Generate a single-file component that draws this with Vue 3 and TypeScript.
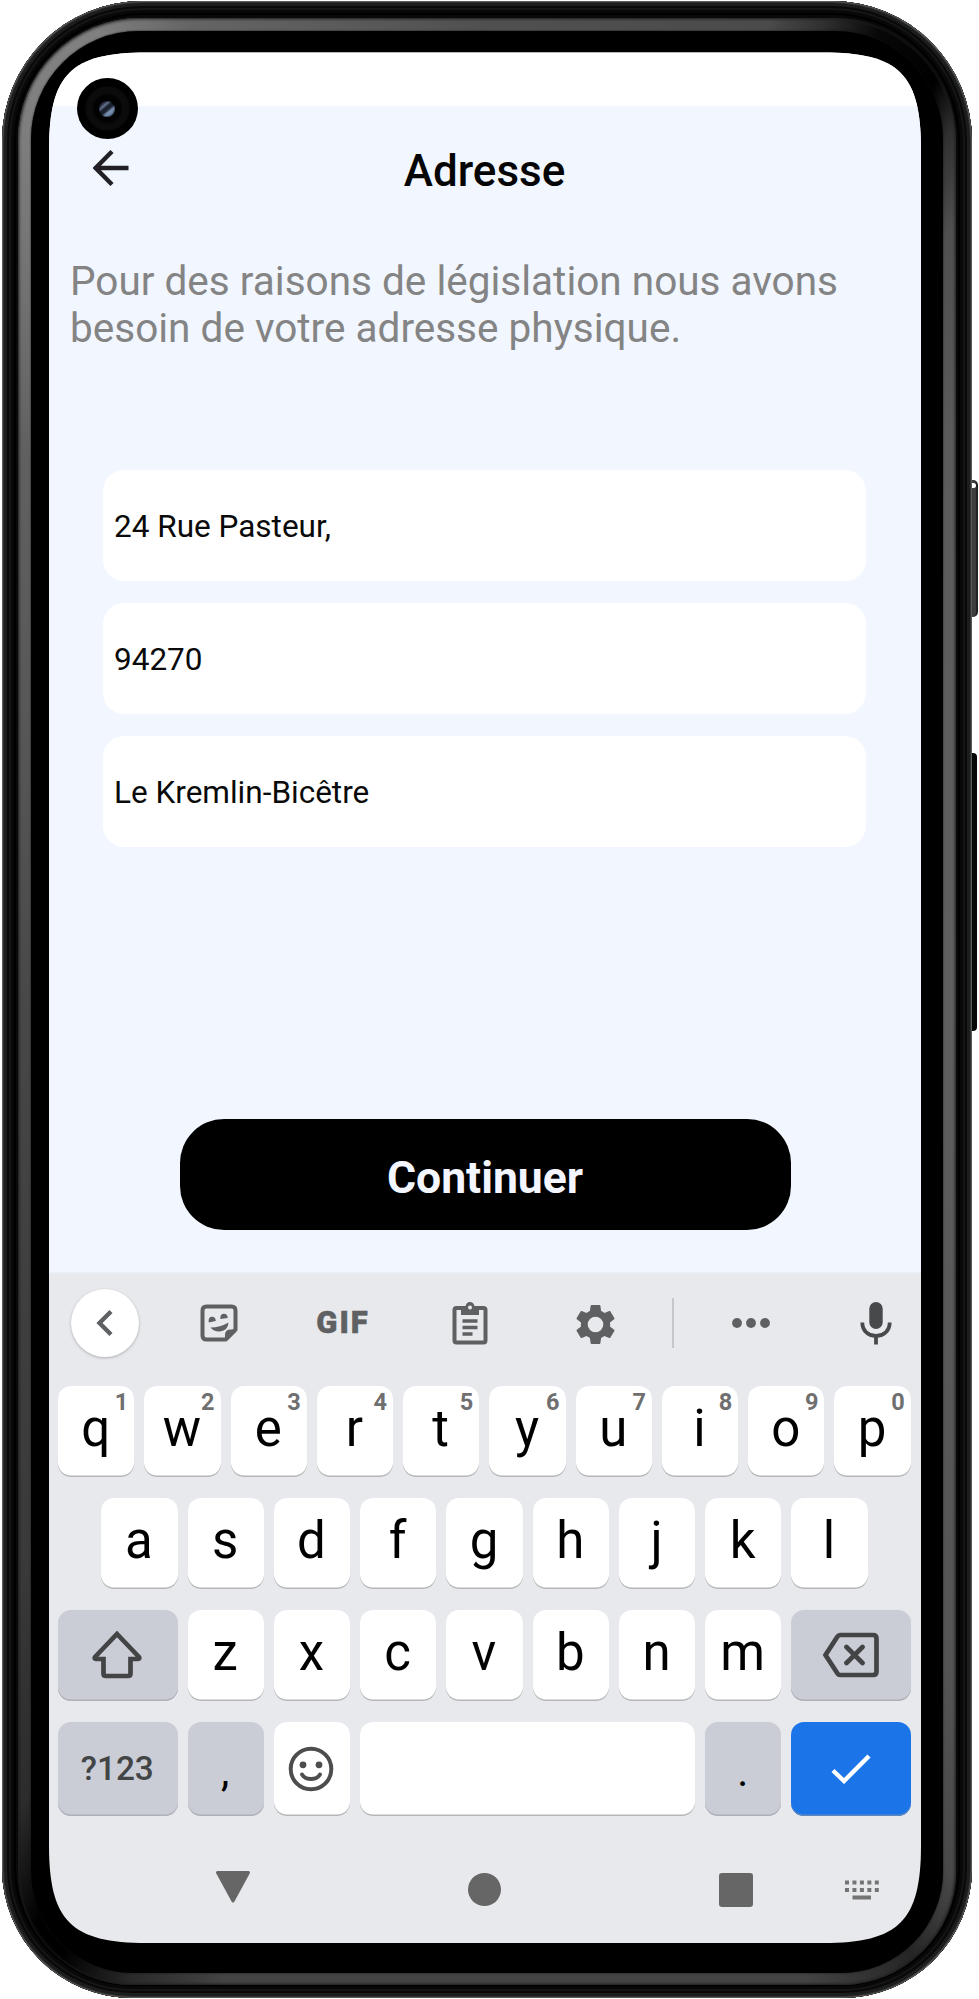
<script setup lang="ts">
import { ref } from 'vue'

interface Key { label: string; hint?: string }

const fields = ref<string[]>(['24 Rue Pasteur,', '94270', 'Le Kremlin-Bicêtre'])
const topRow: Key[] = 'qwertyuiop'.split('').map((label, i) => ({ label, hint: String((i + 1) % 10) }))
const middleRow = 'asdfghjkl'.split('')
const bottomRow = 'zxcvbnm'.split('')
</script>

<template>
  <div class="stage">
    <i class="side power"><b></b></i>
    <i class="side volume"></i>
    <div class="body">
      <div class="rim"></div>
      <div class="bezel"></div>
    </div>
    <div class="screen">
      <div class="status"></div>
      <main class="page">
        <header class="header">
          <svg class="back" viewBox="0 0 36 36" width="36" height="36">
            <path d="M35.5 18H3M19 1.5L2.7 18L19 34.5" fill="none" stroke="#222024" stroke-width="4.4" />
          </svg>
          <h1>Adresse</h1>
        </header>
        <p class="intro">Pour des raisons de législation nous avons<br />besoin de votre adresse physique.</p>
        <div class="fields">
          <div v-for="f in fields" :key="f" class="field">{{ f }}</div>
        </div>
        <button class="submit">Continuer</button>
      </main>
      <section class="keyboard">
        <div class="tools">
          <span class="collapse">
            <svg viewBox="0 0 20 28" width="20" height="28"><path d="M16 2.5L4.5 14L16 25.5" fill="none" stroke="#5f6062" stroke-width="4.4" /></svg>
          </span>
          <svg viewBox="0 0 38 38" width="38" height="38">
            <path d="M6.5 2.5H31.5Q35.500 2.500 35.500 6.500V25.500L25.500 35.500H6.500Q2.500 35.500 2.500 31.500V6.500Q2.500 2.500 6.500 2.500Z" fill="none" stroke="#5f6062" stroke-width="4" />
            <path d="M25 36V31Q25 25.500 30.500 25.500H36L37 27L27 37Z" fill="#5f6062" />
            <path d="M8.700 18.500Q8 12.800 12 12.800Q15.500 12.800 15.800 17ZM20.300 15Q20 9.700 24 9.700Q27.500 9.700 27.800 14ZM10.500 23.500Q20 23.500 28.500 18.500Q28 26.500 20 27.500Q14 28 10.500 23.500Z" fill="#5f6062" />
          </svg>
          <span class="gif">GIF</span>
          <svg viewBox="0 0 36 44" width="36" height="44">
            <rect x="2.500" y="7" width="31" height="34.500" rx="2" fill="none" stroke="#5f6062" stroke-width="4" />
            <path d="M9 5H13.500Q14.500 1 18 1Q21.500 1 22.500 5H27V14H9Z" fill="#5f6062" />
            <circle cx="18" cy="6.500" r="2" fill="#e8e9ed" />
            <path d="M10.500 20H25.500M10.500 26.500H25.500M10.500 33H20.500" stroke="#5f6062" stroke-width="3.600" />
          </svg>
          <svg class="gear" viewBox="2 2 20 20" width="39" height="39">
            <path d="M19.430 12.980c.04-.32.07-.64.07-.98s-.03-.66-.07-.98l2.110-1.650c.19-.15.24-.42.12-.64l-2-3.460c-.12-.22-.39-.3-.61-.22l-2.490 1c-.52-.4-1.080-.73-1.690-.98l-.38-2.650C14.460 2.180 14.250 2 14 2h-4c-.25 0-.46.18-.49.42l-.38 2.650c-.61.25-1.170.59-1.690.98l-2.490-1c-.23-.09-.49 0-.61.22l-2 3.460c-.13.22-.07.49.12.64l2.110 1.650c-.04.32-.07.65-.07.98s.03.66.07.98l-2.110 1.650c-.19.15-.24.42-.12.64l2 3.460c.12.22.39.3.61.22l2.490-1c.52.4 1.080.73 1.690.98l.38 2.650c.03.24.24.42.49.42h4c.25 0 .46-.18.49-.42l.38-2.650c.61-.25 1.170-.59 1.690-.98l2.490 1c.23.09.49 0 .61-.22l2-3.460c.12-.22.07-.49-.12-.64l-2.110-1.650zM12 16a4 4 0 1 1 0-8a4 4 0 0 1 0 8z" fill="#5f6062" />
          </svg>
          <span class="divider"></span>
          <svg viewBox="0 0 38 10" width="38" height="10"><g fill="#5f6062"><circle cx="5" cy="5" r="4.900" /><circle cx="19" cy="5" r="4.900" /><circle cx="33" cy="5" r="4.900" /></g></svg>
          <svg class="mic" viewBox="0 0 32 44" width="32" height="44">
            <rect x="9.300" y="1" width="13.400" height="27" rx="6.700" fill="#48494b" />
            <path d="M2.300 21.500C2.300 39.500 29.700 39.500 29.700 21.500M16 34V43.500" fill="none" stroke="#48494b" stroke-width="3.800" />
          </svg>
        </div>
        <div class="row">
          <span v-for="k in topRow" :key="k.label" class="key">{{ k.label }}<sup>{{ k.hint }}</sup></span>
        </div>
        <div class="row inset">
          <span v-for="k in middleRow" :key="k" class="key">{{ k }}</span>
        </div>
        <div class="row">
          <span class="key wide dim">
            <svg viewBox="0 0 50 48" width="50" height="48"><path d="M25 3.500L47 26.500Q48 28.500 46 28.500H38.500V43Q38.500 45.500 36 45.500H14Q11.500 45.500 11.500 43V28.500H4Q2 28.500 3 26.500Z" transform="translate(0 -.5)" fill="none" stroke="#434446" stroke-width="4.700" /></svg>
          </span>
          <span v-for="k in bottomRow" :key="k" class="key">{{ k }}</span>
          <span class="key wide dim">
            <svg viewBox="0 0 56 46" width="56" height="46"><path d="M17 3H50Q53.500 3 53.500 6.500V39.500Q53.500 43 50 43H17Q15.500 43 14.500 41.500L2.500 23L14.500 4.500Q15.500 3 17 3ZM23.500 15L39.500 31M39.500 15L23.500 31" fill="none" stroke="#434446" stroke-width="4.700" stroke-linecap="round" /></svg>
          </span>
        </div>
        <div class="row last">
          <span class="key wide dim mode">?123</span>
          <span class="key dim punct">,</span>
          <span class="key">
            <svg viewBox="0 0 46 46" width="46" height="46"><circle cx="23" cy="23" r="20.300" fill="none" stroke="#4c4d4f" stroke-width="4" /><circle cx="15" cy="18.800" r="3.400" fill="#4c4d4f" /><circle cx="31" cy="18.800" r="3.400" fill="#4c4d4f" /><path d="M14 28.500Q16.500 33 23 33Q29.500 33 32 28.500" fill="none" stroke="#4c4d4f" stroke-width="3.800" stroke-linecap="round" /></svg>
          </span>
          <span class="key space"></span>
          <span class="key dim punct">.</span>
          <span class="key wide enter">
            <svg viewBox="0 0 40 30" width="40" height="30"><path d="M2 16.500L13 27L38 2" fill="none" stroke="#fff" stroke-width="4.400" /></svg>
          </span>
        </div>
      </section>
      <nav class="nav">
        <svg class="hide" viewBox="0 0 36 34" width="36" height="34"><path d="M2.500 2.500H33.500L18 31Z" fill="#666" stroke="#666" stroke-width="3" stroke-linejoin="round" /></svg>
        <i class="home"></i>
        <i class="recent"></i>
        <svg class="switch" viewBox="0 0 34 20" width="34" height="20"><path d="M0 2.500H34M0 10H34" stroke="#747474" stroke-width="4" stroke-dasharray="4 3.450" /><path d="M7.500 17.500H26" stroke="#747474" stroke-width="4" /></svg>
      </nav>
    </div>
    <div class="camera"><i></i></div>
  </div>
</template>

<style>
body { margin: 0; background: #fff; }
</style>

<style scoped>
* { box-sizing: border-box; }
.stage { position: relative; width: 979px; height: 1999px; overflow: hidden; background: #fff; font-family: Roboto, "Liberation Sans", sans-serif; }
.side { position: absolute; background: #3d3d3d; }
.power { left: 969px; top: 480px; width: 9px; height: 137px; border-radius: 0 5px 5px 0; border-right: 2px solid #222; }
.power b { position: absolute; left: 3px; top: 3px; width: 4px; height: 5px; border-radius: 0 3px 3px 0; background: #fff; }
.volume { left: 969px; top: 753px; width: 8px; height: 278px; border-radius: 0 4px 4px 0; background: #050606; }
.body {
  position: absolute; left: 1.500px; top: 1px; width: 970px; height: 1997px;
  border-radius: 140px 140px 130px 130px;
  background: #090909;
  box-shadow: inset 0 0 0 1px #5a5b58, inset 0 0 0 2px #303131, inset 0 0 0 5px #1c1d1d, inset 0 0 0 7px #090909, inset 0 0 0 9px #151515, inset 0 0 0 12px #080808, inset 0 0 0 14px #000;
}
.rim {
  position: absolute; left: 16.500px; top: 17px; right: 16px; bottom: 13.500px;
  border-radius: 122px 122px 114px 114px;
  background: conic-gradient(#505050 0deg, #4b4b4b 16deg, #303030 19deg, #080808 22deg, #000 26deg, #303030 28deg, #505050 31deg, #5c5c5c 40deg, #606060 90deg, #555 145deg, #494949 152deg, #252525 156deg, #444 162deg, #444 195deg, #2a2a2a 200deg, #000 204deg, #000 206deg, #2c2c2c 210deg, #3a3a3a 220deg, #484848 270deg, #606060 320deg, #808080 333deg, #808080 338deg, #656565 343deg, #505050 360deg);
  box-shadow: inset 0 0 3px 1px #1b1b1b;
}
.bezel { position: absolute; left: 29.500px; top: 30px; right: 29px; bottom: 25px; border-radius: 108px 108px 102px 102px; background: #000; box-shadow: 0 0 2px #111; }
.screen {
  position: absolute; left: 49px; top: 52px; width: 872px; height: 1891px; display: flex; flex-direction: column; background: #e8e9ed;
  clip-path: path("M0 98C0 22 22 .5 98 .5H774C850 .5 872 22 872 98V1793C872 1869 850 1891 774 1891H98C22 1891 0 1869 0 1793Z");
}
.status { height: 54px; background: #fff; flex: none; }
.page { height: 1168px; flex: none; background: #f1f6ff; display: flex; flex-direction: column; align-items: center; border-bottom: 2px solid #e9eef7; }
.header { width: 100%; height: 130px; position: relative; display: flex; align-items: center; justify-content: center; }
.back { position: absolute; left: 44px; top: 44px; }
h1 { margin: 0 1px 0 0; font-size: 44px; line-height: 52px; font-weight: 500; color: #050505; }
.intro { margin: 22px 0 0; padding-left: 21px; width: 100%; font-size: 40.520px; line-height: 47.200px; color: #848484; white-space: nowrap; }
.fields { margin: 117.500px 1px 0 0; display: flex; flex-direction: column; gap: 22px; }
.field { width: 763px; height: 111.200px; border-radius: 21px; background: #fff; display: flex; align-items: center; padding: 2px 0 0 11px; font-size: 31.500px; color: #0a0a0a; white-space: nowrap; }
.submit { margin: 272px 0 0; width: 611px; height: 111px; border: 0; border-radius: 44px; background: #000; color: #f3f6ff; font: 700 44.500px/52px Roboto, sans-serif; padding: 6px 0 0; }
.keyboard { width: 100%; padding-left: 9px; flex: none; }
.tools { margin-left: -9px; height: 100px; padding-bottom: 2px; width: 872px; display: grid; grid-template-columns: 112px 116px 132px 122px 129px 25px 132px 104px; align-items: center; justify-items: center; }
.collapse { width: 68px; height: 68px; border-radius: 50%; background: #fff; display: flex; align-items: center; justify-content: center; box-shadow: 0 1px 3px rgba(0, 0, 0, .25); }
.gif { font-size: 31px; line-height: 36px; font-weight: 900; color: #5f6062; letter-spacing: 2px; -webkit-text-stroke: .5px #5f6062; }
.gear { margin-top: 2px; }
.divider { width: 2px; height: 50px; background: #c6c7ca; }
.mic { margin-left: 14px; }
.row { display: flex; gap: 10px; height: 91px; margin: 12px 0 21px; }
.row + .row { margin-top: 0; }
.row.inset { padding-left: 43.300px; }
.row.last { height: 94px; margin-bottom: 0; }
.key { position: relative; width: 76.270px; flex: none; border-radius: 13px; background: #fff; color: #000; box-shadow: inset 0 -1.500px 0 #b5b6b9; display: flex; align-items: center; justify-content: center; font-size: 51px; line-height: 60px; padding: 0 1px 5px 0; }
.key > svg { position: relative; top: 2px; }
.key sup { position: absolute; right: 6px; top: 4px; font-size: 23.500px; line-height: 24px; font-weight: 700; color: #6f6f6f; }
.key.wide { width: 119.500px; }
.key.dim { background: #cacdd6; box-shadow: inset 0 -1.500px 0 #aeb0b8; }
.key.space { width: 335.100px; }
.key.enter { background: #1c74e9; box-shadow: inset 0 -1.500px 0 #5f87bf; }
.key.mode { font-size: 33.300px; font-weight: 500; color: #434446; padding-bottom: 0; }
.key.punct { font-size: 42px; padding-top: 10px; }
.nav { flex: 1; display: flex; align-items: flex-start; }
.nav > * { flex: none; }
.hide { margin: 54px 0 0 166px; }
.home { width: 33px; height: 33px; border-radius: 50%; margin: 57px 0 0 217px; background: #666; }
.recent { width: 34px; height: 34px; margin: 57px 0 0 218px; border-radius: 3px; background: #666; }
.switch { margin: 64px 0 0 92px; }
.camera { position: absolute; left: 76.500px; top: 78px; width: 61px; height: 61px; border-radius: 50%; background: radial-gradient(circle, #020202 13px, #0b0b0b 16px, #0b0b0b 21px, #000 23px); display: grid; place-items: center; }
.camera i { width: 16px; height: 16px; border-radius: 50%; background: linear-gradient(140deg, #2e384e 0 22%, #66758f 30%, #1a202e 42% 54%, #7c92b3 66%, #52688a); box-shadow: 0 0 2px #000 inset; }
</style>
